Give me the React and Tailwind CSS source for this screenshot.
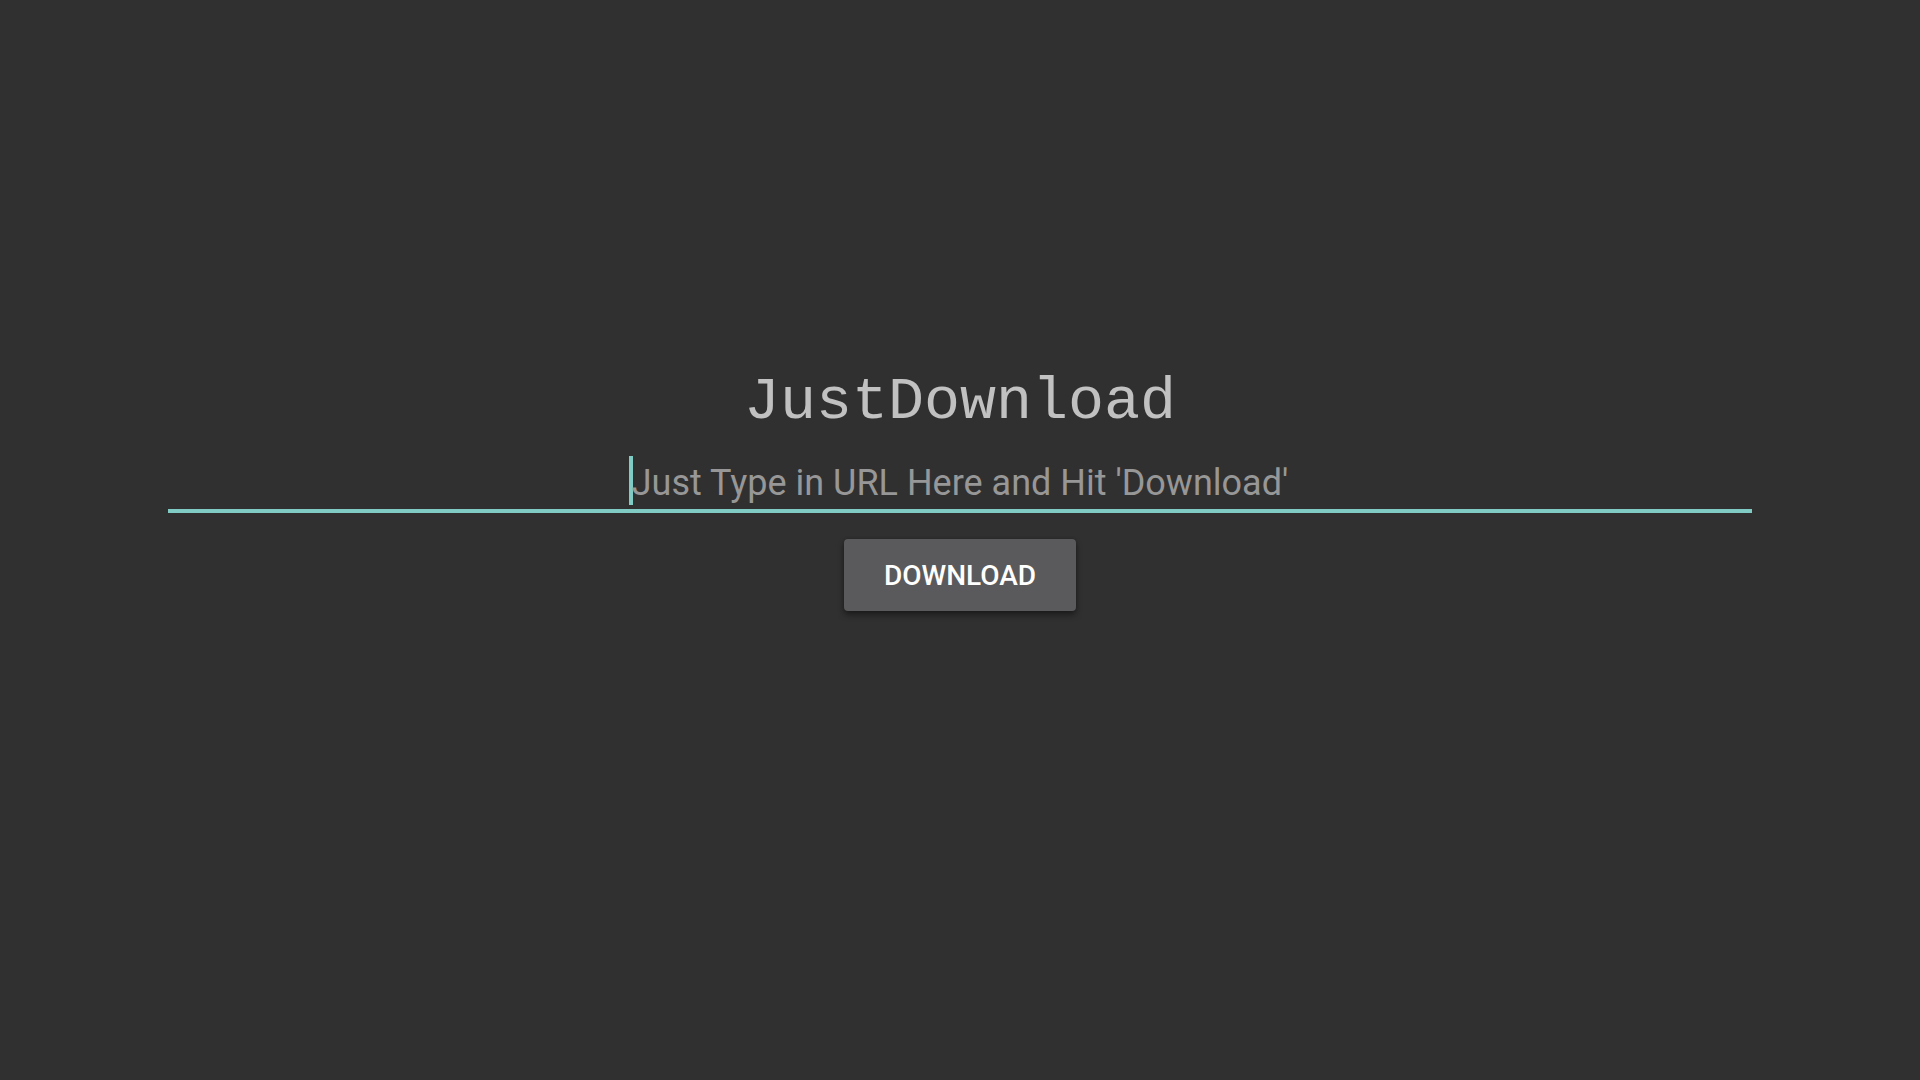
export default function App() {
  return (
    <main className="flex min-h-screen flex-col items-center bg-[#303030] px-[168px] pt-[364px] font-[Roboto,sans-serif]">
      <h1 className="font-['Liberation_Mono',monospace] text-[60px] leading-[76px] text-[#c1c1c1]">JustDownload</h1>
      <form className="flex w-full flex-col items-center" onSubmit={(e) => e.preventDefault()}>
        <div className="relative flex w-full justify-center border-b-4 border-[#80cbc4] pt-4">
          <span className="absolute bottom-1 left-1/2 h-[49px] w-1 -translate-x-[331px] bg-[#80cbc4]" />
          <input
            type="text"
            aria-label="URL"
            placeholder="Just Type in URL Here and Hit 'Download'"
            className="relative h-[53px] w-full bg-transparent text-center text-[36px] text-white outline-none placeholder:text-[#979797]"
          />
        </div>
        <button
          type="submit"
          className="mt-[26px] h-[72px] w-[232px] rounded bg-[#5a5a5c] pt-0.5 text-[28px] font-medium text-white shadow-[0_4px_6px_rgba(0,0,0,0.4),0_0_3px_rgba(0,0,0,0.2)]"
        >
          DOWNLOAD
        </button>
      </form>
    </main>
  );
}
